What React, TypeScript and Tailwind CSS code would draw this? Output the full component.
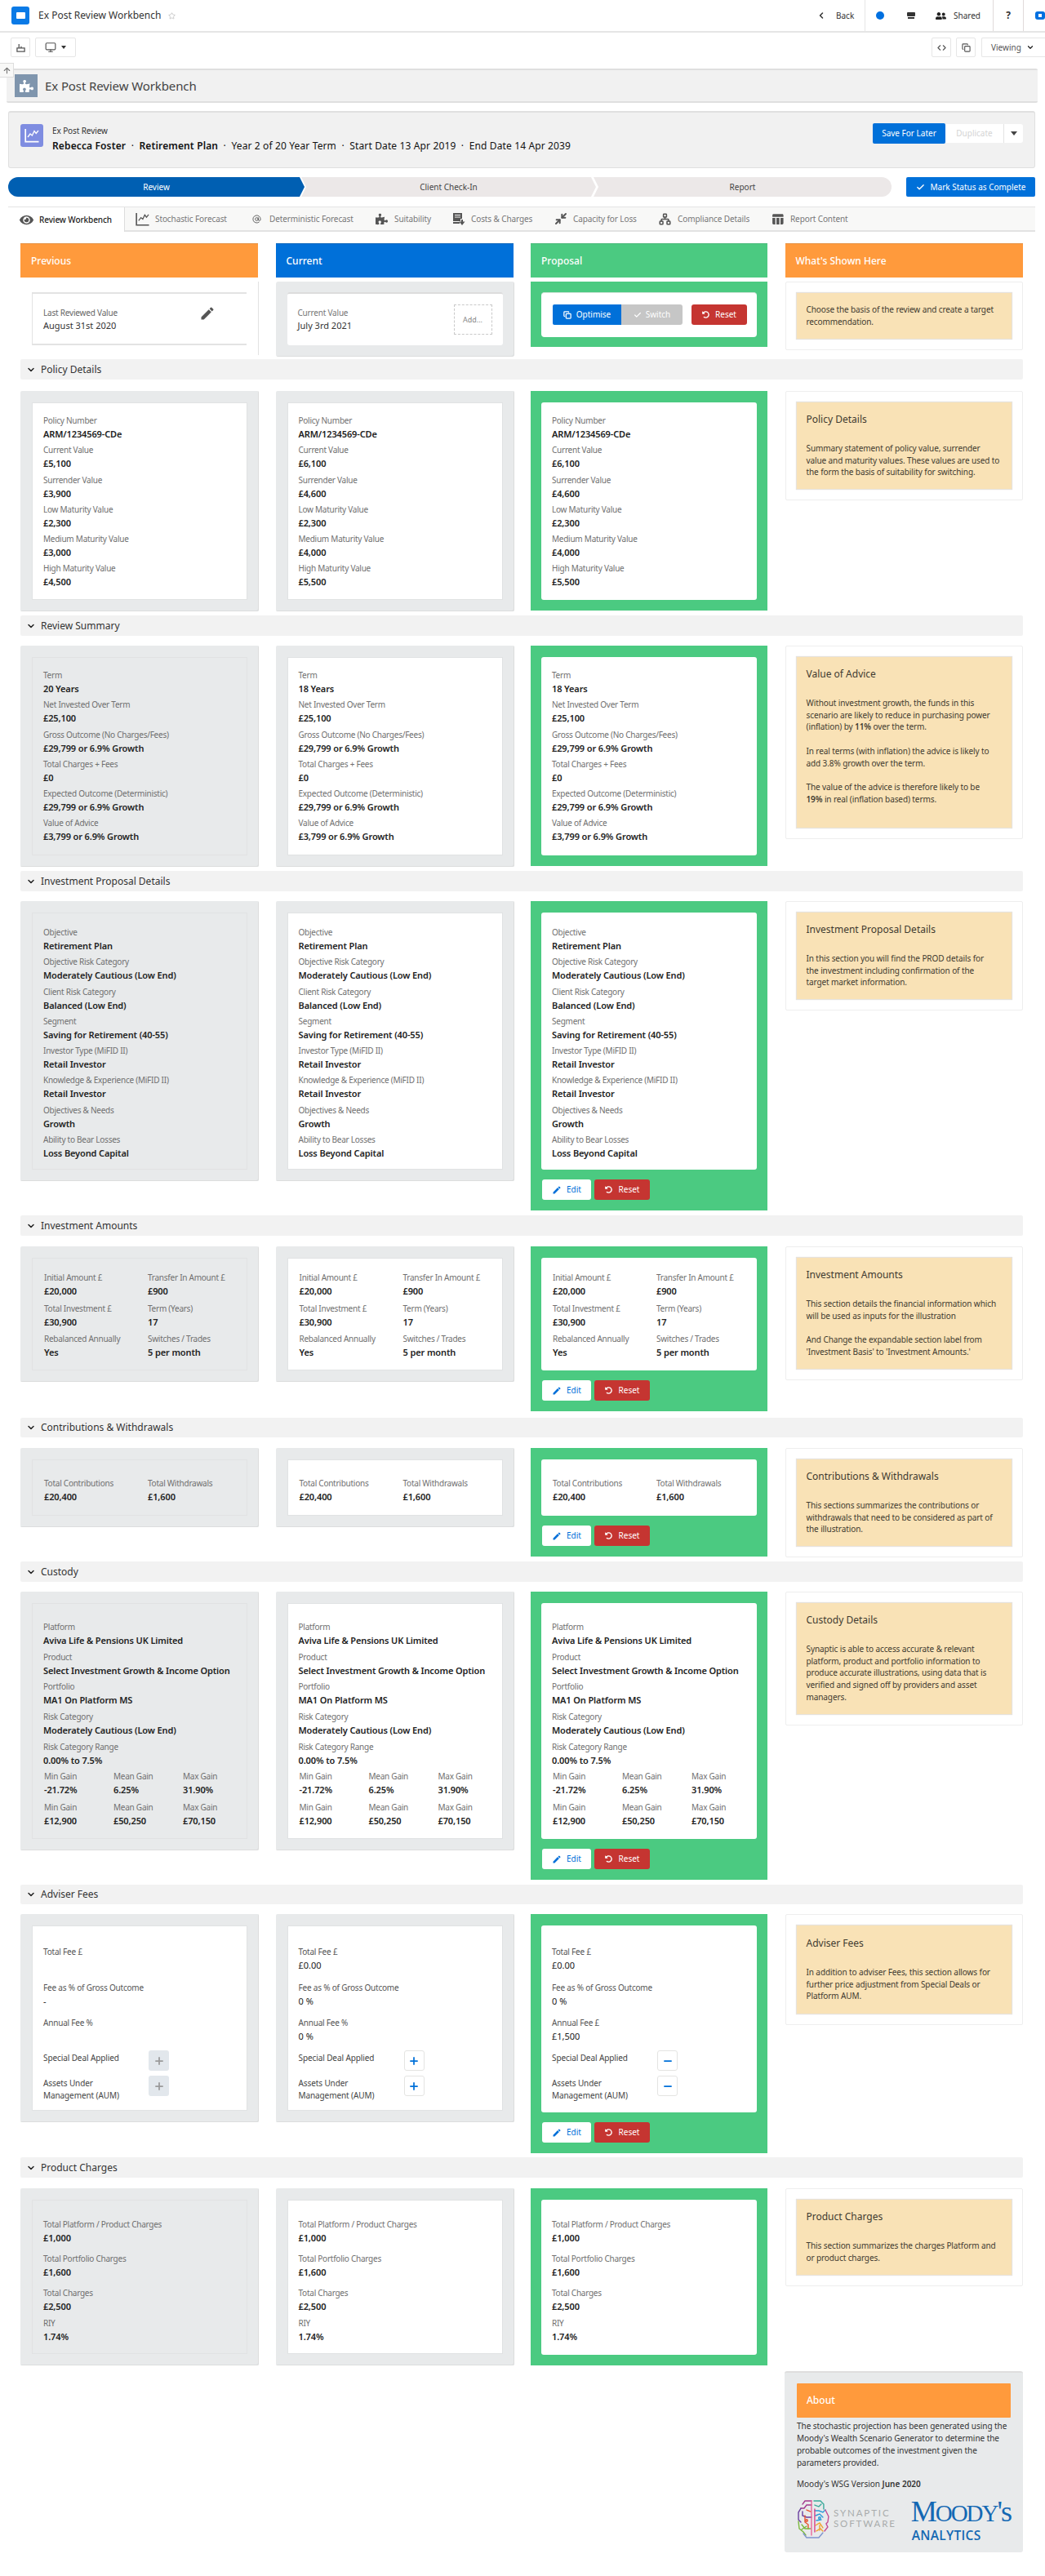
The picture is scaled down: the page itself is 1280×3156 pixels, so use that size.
import React from "react";
import { FaPuzzlePiece, FaUndoAlt, FaEye, FaUserFriends } from "react-icons/fa";
import {
  ChevronDown,
  ChevronLeft,
  Check,
  Plus,
  Minus,
  Star,
  ArrowUp,
  Monitor,
  Copy,
  Code,
  Minimize2,
  Network,
  AtSign,
} from "lucide-react";
import { MdEdit, MdTableChart } from "react-icons/md";

type Pair = [string, string];
type Tone = "grey" | "flat" | "green";

function LineChart({ className }: { className: string }) {
  return (
    <svg viewBox="0 0 18 18" className={className} fill="none" stroke="currentColor">
      <path d="M1.2 1v15.6H17.5" strokeWidth="1.7" />
      <path d="M4 11l3-4 2.4 2L12 3.5l2.2 3L17 3" strokeWidth="1.3" />
    </svg>
  );
}

function Field({ pair, row }: { pair: Pair; row: string }) {
  return (
    <div className={row}>
      <div className="h-4 whitespace-nowrap text-[10px] leading-4 tracking-[-0.25px] text-[#6f6f6f]">{pair[0]}</div>
      <div className="h-[17px] whitespace-nowrap text-[11px] leading-[17px] font-semibold tracking-[-0.12px] text-[#222]">
        {pair[1]}
      </div>
    </div>
  );
}

function Fields({ items, row }: { items: Pair[]; row: string }) {
  return (
    <>
      {items.map((p, i) => (
        <Field key={i} pair={p} row={row} />
      ))}
    </>
  );
}

function Grid({ items, cols, row }: { items: Pair[]; cols: string; row: string }) {
  return (
    <div className={"grid pl-px " + cols}>
      <Fields items={items} row={row} />
    </div>
  );
}

function EditReset() {
  return (
    <div className="mt-3 flex gap-1 pl-px">
      <button className="flex h-[25px] w-[60px] items-center justify-center gap-1.5 rounded-[3px] bg-white text-[10px] text-[#0070d9]">
        <MdEdit className="size-3" />
        Edit
      </button>
      <button className="flex h-[25px] w-[68px] items-center justify-center gap-2 rounded-[3px] bg-[#c53531] text-[10px] text-white">
        <FaUndoAlt className="size-[9px]" />
        Reset
      </button>
    </div>
  );
}

function Card({
  tone,
  inner,
  edit,
  children,
}: {
  tone: Tone;
  inner: string;
  edit?: boolean;
  children: React.ReactNode;
}) {
  const green = tone === "green";
  const outer = green
    ? "w-[290px] bg-[#4bca81] p-[13px] pt-[14px]"
    : "w-[292px] rounded-[2px] bg-[#e8eaeb] px-[14px] pt-[14px] pb-[14px] shadow-[inset_-1px_-1px_0_#dcdddd]";
  const box = green
    ? "rounded-[3px] bg-white px-[13px]"
    : tone === "grey"
      ? "border border-[#e0e2e3] bg-white px-[13px]"
      : "border border-[#e1e2e3] px-[13px]";
  return (
    <div className={"shrink-0 " + outer}>
      <div className={"overflow-hidden " + box + " " + inner}>{children}</div>
      {edit && <EditReset />}
    </div>
  );
}

function Note({ title, box, children }: { title?: string; box: string; children: React.ReactNode }) {
  return (
    <div className="w-[291px] shrink-0 rounded-[2px] border border-[#eeeeee] p-[13px]">
      <div className={"bg-[#f9e2b6] pl-3 text-[10px] leading-[14.7px] tracking-[-0.1px] text-[#3f3a30] shadow-[0_0_1px_1px_#e6e2dc] " + box}>
        {title && <h3 className="mb-[20px] text-[12px] leading-4 tracking-normal">{title}</h3>}
        <div className="whitespace-pre">{children}</div>
      </div>
    </div>
  );
}

function Section({
  title,
  height,
  bar = "h-[25px]",
  gap = "mt-[13px]",
  children,
}: {
  title: string;
  height: string;
  bar?: string;
  gap?: string;
  children: React.ReactNode;
}) {
  return (
    <section className={height}>
      <div className={"flex items-center rounded-[2px] bg-[#f2f2f2] pl-[7px] " + bar}>
        <ChevronDown className="size-[12px] text-[#222]" strokeWidth={3} />
        <h2 className="ml-[6px] text-[12px] text-[#333]">{title}</h2>
      </div>
      <Columns className={gap}>{children}</Columns>
    </section>
  );
}

function Columns({ className = "", children }: { className?: string; children: React.ReactNode }) {
  return (
    <div className={"grid grid-cols-[312.5px_312.5px_311.5px_291px] items-start " + className}>{children}</div>
  );
}

const ROW = "h-[36.3px]";

const policyPrev: Pair[] = [
  ["Policy Number", "ARM/1234569-CDe"],
  ["Current Value", "£5,100"],
  ["Surrender Value", "£3,900"],
  ["Low Maturity Value", "£2,300"],
  ["Medium Maturity Value", "£3,000"],
  ["High Maturity Value", "£4,500"],
];
const policyNow: Pair[] = [
  ["Policy Number", "ARM/1234569-CDe"],
  ["Current Value", "£6,100"],
  ["Surrender Value", "£4,600"],
  ["Low Maturity Value", "£2,300"],
  ["Medium Maturity Value", "£4,000"],
  ["High Maturity Value", "£5,500"],
];
const summary = (years: string): Pair[] => [
  ["Term", years],
  ["Net Invested Over Term", "£25,100"],
  ["Gross Outcome (No Charges/Fees)", "£29,799 or 6.9% Growth"],
  ["Total Charges + Fees", "£0"],
  ["Expected Outcome (Deterministic)", "£29,799 or 6.9% Growth"],
  ["Value of Advice", "£3,799 or 6.9% Growth"],
];
const proposal: Pair[] = [
  ["Objective", "Retirement Plan"],
  ["Objective Risk Category", "Moderately Cautious (Low End)"],
  ["Client Risk Category", "Balanced (Low End)"],
  ["Segment", "Saving for Retirement (40-55)"],
  ["Investor Type (MiFID II)", "Retail Investor"],
  ["Knowledge & Experience (MiFID II)", "Retail Investor"],
  ["Objectives & Needs", "Growth"],
  ["Ability to Bear Losses", "Loss Beyond Capital"],
];
const amounts: Pair[] = [
  ["Initial Amount £", "£20,000"],
  ["Transfer In Amount £", "£900"],
  ["Total Investment £", "£30,900"],
  ["Term (Years)", "17"],
  ["Rebalanced Annually", "Yes"],
  ["Switches / Trades", "5 per month"],
];
const contributions: Pair[] = [
  ["Total Contributions", "£20,400"],
  ["Total Withdrawals", "£1,600"],
];
const custody: Pair[] = [
  ["Platform", "Aviva Life & Pensions UK Limited"],
  ["Product", "Select Investment Growth & Income Option"],
  ["Portfolio", "MA1 On Platform MS"],
  ["Risk Category", "Moderately Cautious (Low End)"],
  ["Risk Category Range", "0.00% to 7.5%"],
];
const gains: Pair[] = [
  ["Min Gain", "-21.72%"],
  ["Mean Gain", "6.25%"],
  ["Max Gain", "31.90%"],
  ["Min Gain", "£12,900"],
  ["Mean Gain", "£50,250"],
  ["Max Gain", "£70,150"],
];
const charges: Pair[] = [
  ["Total Platform / Product Charges", "£1,000"],
  ["Total Portfolio Charges", "£1,600"],
  ["Total Charges", "£2,500"],
];

const tones: Tone[] = ["flat", "grey", "green"];

function Fees({ items, kind }: { items: Pair[]; kind: "off" | "plus" | "minus" }) {
  const btn =
    kind === "off"
      ? "bg-[#e2e7ec] text-[#9a9a9a]"
      : "border border-[#e4e4e2] bg-white text-[#0070d9]";
  const Icon = kind === "minus" ? Minus : Plus;
  return (
    <>
      {items.map((p, i) => (
        <div key={i} className="h-[43.7px]">
          <div className="h-4 text-[10px] leading-4 tracking-[-0.2px] text-[#555]">{p[0]}</div>
          <div className="h-[17px] text-[11px] leading-[17px] text-[#222]">{p[1]}</div>
        </div>
      ))}
      <div className="flex h-[31px] text-[10px] leading-[15px] tracking-[-0.1px] text-[#444]">
        <span className="w-[129px]">Special Deal Applied</span>
        <span className={"-mt-[2px] flex size-[25px] items-center justify-center rounded-[3px] " + btn}>
          <Icon className="size-[14px]" strokeWidth={3} />
        </span>
      </div>
      <div className="flex text-[10px] leading-[14.5px] tracking-[-0.1px] text-[#444]">
        <span className="w-[129px]">
          Assets Under
          <br />
          Management (AUM)
        </span>
        <span className={"-mt-[2px] flex size-[25px] items-center justify-center rounded-[3px] " + btn}>
          <Icon className="size-[14px]" strokeWidth={3} />
        </span>
      </div>
    </>
  );
}

function TopBar() {
  return (
    <header className="flex h-[40px] items-center border-b-2 border-[#e5e5e5] text-[11px] text-[#333]">
      <span className="ml-[14px] flex size-[22px] items-center justify-center rounded-[3px] bg-[#0a7ae6]">
        <span className="h-2 w-[11px] rounded-[1px] bg-white" />
      </span>
      <span className="ml-[11px] w-[153px] text-[12px]">Ex Post Review Workbench</span>
      <Star className="ml-[6px] size-[9px] text-[#bbb]" />
      <div className="ml-auto flex h-full items-center">
        <div className="flex h-full w-[60px] items-center border-r border-[#e6e6e6]">
          <ChevronLeft className="size-[12px]" strokeWidth={3} />
          <span className="ml-[12px] text-[10px]">Back</span>
        </div>
        <div className="flex h-full w-[157px] items-center border-r border-[#e0dada]">
          <span className="ml-[13px] size-[10px] rounded-full bg-[#0070e0]" />
          <span className="ml-[28px] flex w-[10px] flex-col gap-px">
            <span className="h-[5px] rounded-[1px] bg-[#333]" />
            <span className="mx-auto h-[2px] w-[8px] bg-[#333]" />
          </span>
          <FaUserFriends className="ml-[25px] size-[13px] text-[#222]" />
          <span className="ml-[9px] text-[10px]">Shared</span>
        </div>
        <div className="flex h-full w-[37px] items-center justify-center border-r border-[#e0dada] text-[12px] font-bold">?</div>
        <div className="flex w-[26px] items-center pl-[14px]">
          <span className="flex h-[10px] w-[12px] items-center justify-center rounded-[3px] bg-[#0070e0]">
            <span className="size-[4px] bg-white" />
          </span>
        </div>
      </div>
    </header>
  );
}

function ToolBar() {
  return (
    <div className="flex h-[44px] items-start pt-[6px] text-[#555]">
      <span className="ml-[13px] flex h-6 w-6 items-center justify-center rounded-[2px] border border-[#e6e6e6]">
        <svg viewBox="0 0 12 12" className="size-[11px]" fill="none" stroke="currentColor" strokeWidth="1.4">
          <path d="M3.5 1v5M6.5 4v2M1 6.5h10V11H1z" />
        </svg>
      </span>
      <span className="ml-[6px] flex h-6 w-[50px] items-center justify-center gap-[6px] rounded-[2px] border border-[#e6e6e6]">
        <Monitor className="size-[14px]" strokeWidth={2} />
        <span className="border-x-[3px] border-t-[4px] border-x-transparent border-t-[#333]" />
      </span>
      <span className="ml-auto flex h-6 w-6 items-center justify-center rounded-[2px] border border-[#e6e6e6]">
        <Code className="size-[11px]" strokeWidth={2.5} />
      </span>
      <span className="ml-[6px] flex h-6 w-6 items-center justify-center rounded-[2px] border border-[#e6e6e6]">
        <Copy className="size-[11px]" strokeWidth={2.5} />
      </span>
      <span className="ml-[7px] flex h-6 w-[78px] items-center rounded-l-[2px] border border-r-0 border-[#e6e6e6] pl-[11px] text-[10px]">
        Viewing
        <ChevronDown className="ml-[6px] size-[10px] text-[#222]" strokeWidth={3} />
      </span>
    </div>
  );
}

function StatusPath() {
  return (
    <div className="mt-[11px] flex h-6 pl-[10px] text-[10px]">
      <div className="flex w-[363px] items-center justify-center rounded-l-[12px] bg-[#005fb2] text-white [clip-path:polygon(0_0,calc(100%-6px)_0,100%_50%,calc(100%-6px)_100%,0_100%)]">
        Review
      </div>
      <div className="-ml-[4px] flex w-[361px] items-center justify-center bg-[#ece8e8] text-[#444] [clip-path:polygon(0_0,calc(100%-6px)_0,100%_50%,calc(100%-6px)_100%,0_100%,6px_50%)]">
        Client Check-In
      </div>
      <div className="-ml-[3px] flex w-[365px] items-center justify-center rounded-r-[12px] bg-[#ece8e8] text-[#444] [clip-path:polygon(0_0,100%_0,100%_100%,0_100%,6px_50%)]">
        Report
      </div>
      <button className="ml-[18px] flex w-[158px] items-center justify-center gap-[7px] rounded-[2px] bg-[#0070d9] text-[10px] text-white">
        <Check className="size-[11px]" strokeWidth={3} />
        Mark Status as Complete
      </button>
    </div>
  );
}

function Tab({ icon, label, width }: { icon: React.ReactNode; label: string; width: string }) {
  return (
    <div className={"flex h-full items-center whitespace-nowrap " + width}>
      <span className="flex w-[17px] shrink-0 justify-center text-[#555]">{icon}</span>
      <span className="ml-[7px]">{label}</span>
    </div>
  );
}

function Tabs() {
  return (
    <nav className="mt-3 ml-[10px] flex h-[31px] w-[1258px] border-t border-[#e4e4e4] text-[10px] tracking-[-0.1px] text-[#777]">
      <div className="flex w-[143px] items-center border-r border-[#ddd] pl-[14px] font-medium whitespace-nowrap text-[#222]">
        <FaEye className="size-[17px] text-[#555]" />
        <span className="ml-[7px]">Review Workbench</span>
      </div>
      <div className="flex flex-1 items-center border-b-2 border-[#e2e2e2] bg-[#f8f8f7] pl-[13px]">
        <Tab width="w-[140px]" icon={<LineChart className="size-[17px]" />} label="Stochastic Forecast" />
        <Tab width="w-[153px]" icon={<AtSign className="size-[11px]" />} label="Deterministic Forecast" />
        <Tab width="w-[94px]" icon={<FaPuzzlePiece className="size-[15px]" />} label="Suitability" />
        <Tab
          width="w-[125px]"
          icon={
            <svg viewBox="0 0 16 16" className="size-[16px]" fill="currentColor">
              <path d="M1 1h11v7h-2v3H1zM3 3v1h7V3zm0 2.600v1h7v-1zM1 12h8v2H1zM11 9h2v2.500h2.500L12 16l-3.500-4.500H11z" />
            </svg>
          }
          label="Costs & Charges"
        />
        <Tab width="w-[128px]" icon={<Minimize2 className="size-[16px]" strokeWidth={3} />} label="Capacity for Loss" />
        <Tab width="w-[138px]" icon={<Network className="size-[15px]" strokeWidth={2.5} />} label="Compliance Details" />
        <Tab width="w-[110px]" icon={<MdTableChart className="size-[19px]" />} label="Report Content" />
      </div>
    </nav>
  );
}

function Brain() {
  return (
    <svg viewBox="0 0 40 48" className="h-[48px] w-[40px]" fill="none" strokeWidth="1.4" strokeLinecap="round">
      <path d="M18 1H10L7 5M18 6h-6l-3 4H5" stroke="#a23a8d" />
      <path d="M5 10l-3 5v9l3 3M7 14v5l5 2h6" stroke="#6b3fa0" />
      <path d="M12 12l5 2M10 19v8l4 3v5" stroke="#e8542f" />
      <path d="M2 26l1 9 5 4 3 4M6 30l4 5h7M6 36l6-4" stroke="#7ab83c" />
      <path d="M18 1v42" stroke="#e8679a" />
      <path d="M21 1h8l4 4v6M22 6l5 2 3-3" stroke="#3aa99b" />
      <path d="M22 13h5l5 2 3-3M23 19l5-2 4 4M24 25l6-1" stroke="#2d9bd8" />
      <path d="M35 12l4 8-1 7-2 2 2 4-4 5" stroke="#c44a94" />
      <path d="M23 31l5-3 4 6M24 38l5-3 3 3M28 31v6" stroke="#f0a42e" />
      <path d="M22 11v28" stroke="#d83f8a" />
      <path d="M8 41l4 5h15l5-6" stroke="#7f94cf" />
      <circle cx="12" cy="25" r="1.300" stroke="#e8542f" />
      <circle cx="28" cy="22" r="1.300" stroke="#2d9bd8" />
    </svg>
  );
}

function About() {
  return (
    <div className="ml-[936px] h-[222px] w-[292px] rounded-[3px] border-t-2 border-[#dedede] bg-[#e8eaeb] px-[15px] pt-[13px]">
      <div className="flex h-[42px] items-center rounded-[1px] bg-[#ff9a3c] pl-[12px] text-[12px] font-medium text-white">About</div>
      <p className="mt-[3px] text-[10px] leading-[14.9px] tracking-[-0.05px] whitespace-pre text-[#333]">
        {"The stochastic projection has been generated using the\nMoody's Wealth Scenario Generator to determine the\nprobable outcomes of the investment given the\nparameters provided."}
      </p>
      <p className="mt-[10px] text-[10px] leading-4 text-[#333]">
        Moody's WSG Version <b className="font-semibold">June 2020</b>
      </p>
      <div className="mt-[12px] flex">
        <Brain />
        <div className="ml-[5px] w-[95px] pt-[9px] font-['Lato'] text-[11.5px] leading-[13px] tracking-[1.9px] text-[#a9acac]">
          SYNAPTIC
          <br />
          SOFTWARE
        </div>
        <div className="-mt-[3px] text-[#1468b3]">
          <div className="font-['Liberation_Serif'] text-[36px] leading-[34px] tracking-[-2px]">
            M<span className="text-[29px]">OODY</span>'s
          </div>
          <div className="mt-px ml-px font-['Open_Sans'] text-[15.5px] leading-[18px] font-semibold tracking-[0.3px]">ANALYTICS</div>
        </div>
      </div>
    </div>
  );
}

export default function App() {
  return (
    <div className="relative h-[3156px] w-[1280px] overflow-hidden bg-white font-['Noto_Sans',sans-serif] text-[#333]">
      <TopBar />
      <ToolBar />
      <div className="absolute top-[77px] left-0 flex h-[18px] w-[17px] items-center justify-center border border-l-0 border-[#ddd] bg-[#f8f8f7]">
        <ArrowUp className="size-[11px] text-[#777]" strokeWidth={2.5} />
      </div>
      <div className="ml-[8px] flex h-[42px] w-[1263px] items-center rounded-[2px] border-y-2 border-[#dfdfdf] bg-[#f1f1f1] pl-[10px]">
        <span className="flex size-[28px] items-center justify-center bg-[#7f95ad] text-white">
          <FaPuzzlePiece className="size-[17px]" />
        </span>
        <h1 className="ml-[9px] text-[15px] tracking-[-0.1px] text-[#444]">Ex Post Review Workbench</h1>
      </div>
      <div className="mt-[10px] ml-[10px] flex h-[70px] w-[1258px] items-start rounded-[3px] border border-t-2 border-[#e0e0e0] bg-[#f1f1f1]">
        <span className="mt-[14px] ml-[14px] flex size-[28px] items-center justify-center rounded-[3px] bg-[#7f8de1] text-white">
          <LineChart className="size-[18px]" />
        </span>
        <div className="ml-[11px] pt-[14px]">
          <div className="text-[10px] leading-4 tracking-[-0.1px]">Ex Post Review</div>
          <div className="mt-[2px] flex text-[12px] leading-[18px] tracking-[0.13px] whitespace-pre text-[#111]">
            <b className="font-semibold">Rebecca Foster</b>
            {"  ·  "}
            <b className="font-semibold">Retirement Plan</b>
            {"  ·  Year 2 of 20 Year Term  ·  Start Date 13 Apr 2019  ·  End Date 14 Apr 2039"}
          </div>
        </div>
        <div className="mt-[13px] mr-[14px] ml-auto flex items-center text-[10px]">
          <button className="h-[25px] w-[89px] rounded-[2px] bg-[#0070d9] text-white">Save For Later</button>
          <button className="h-[23px] w-[71px] bg-white text-[#d4d4d4]">Duplicate</button>
          <span className="flex h-[23px] w-[24px] items-center justify-center rounded-r-[3px] border-l border-[#e4e4e4] bg-white">
            <span className="border-x-4 border-t-[5px] border-x-transparent border-t-[#444]" />
          </span>
        </div>
      </div>
      <StatusPath />
      <Tabs />

      <main className="mt-[14px] ml-[25px] w-[1228px]">
        <Columns className="h-[47px] text-[12px] font-medium text-white">
          <div className="flex h-[42px] w-[291px] items-center border-t border-[#e59143] bg-[#ff9a3c] pl-[13px]">Previous</div>
          <div className="flex h-[42px] w-[291px] items-center border-t border-[#0a66bd] bg-[#0070d9] pl-[13px]">Current</div>
          <div className="flex h-[42px] w-[290px] items-center border-t border-[#4bba7b] bg-[#4bca81] pl-[13px]">Proposal</div>
          <div className="flex h-[42px] w-[291px] items-center border-t border-[#e59143] bg-[#ff9a3c] pl-[13px]">What's Shown Here</div>
        </Columns>
        <Columns className="h-[95px] text-[11px]">
          <div className="h-[90px] w-[292px] border-r border-[#e2e2e2] px-[14px] pt-[13px]">
            <div className="flex h-[65px] w-[263px] justify-between border-y-2 border-l border-[#e3e3e3] pt-[15px] pr-[38px] pl-[13px]">
              <div>
                <div className="text-[10px] leading-4 tracking-[-0.2px] text-[#666]">Last Reviewed Value</div>
                <div className="text-[11px] leading-4">August 31st 2020</div>
              </div>
              <MdEdit className="-mt-px size-[20px] text-[#555]" />
            </div>
          </div>
          <div className="h-[92px] w-[292px] rounded-[3px] bg-[#e8eaeb] px-[14px] pt-[13px] shadow-[inset_-1px_-1px_0_#dcdddd]">
            <div className="flex h-[65px] justify-between rounded-[3px] border-t-2 border-[#dcdcdc] bg-white pt-[14px] pr-[13px] pl-[13px]">
              <div className="pt-px">
                <div className="text-[10px] leading-4 tracking-[-0.2px] text-[#777]">Current Value</div>
                <div className="text-[11px] leading-4">July 3rd 2021</div>
              </div>
              <div className="-mt-px flex h-[37px] w-[47px] items-center justify-center border border-dashed border-[#c9c9c9] text-[9px] text-[#888]">
                Add...
              </div>
            </div>
          </div>
          <div className="h-[80px] w-[290px] bg-[#4bca81] px-[13px] pt-[13px]">
            <div className="flex h-[55px] items-start rounded-[4px] border-t border-[#cfe3d7] bg-white pt-[14px] pl-[14px] text-[10px] text-white">
              <span className="flex h-[25px] w-[84px] items-center justify-center gap-[6px] rounded-l-[2px] bg-[#0070d9]">
                <Copy className="size-[10px]" strokeWidth={3} />
                Optimise
              </span>
              <span className="flex h-[25px] w-[75px] items-center justify-center gap-[5px] rounded-r-[3px] bg-[#c6c6c6]">
                <Check className="size-[10px]" strokeWidth={3} />
                Switch
              </span>
              <span className="ml-[11px] flex h-[25px] w-[68px] items-center justify-center gap-[7px] rounded-[3px] bg-[#c53531]">
                <FaUndoAlt className="size-[9px]" />
                Reset
              </span>
            </div>
          </div>
          <Note box="h-[56px] pt-[13px]">{"Choose the basis of the review and create a target\nrecommendation."}</Note>
        </Columns>

        <Section title="Policy Details" height="h-[314px]" gap="mt-[14px]">
          <Card tone="grey" inner="h-[242px] pt-[13px]"><Fields items={policyPrev} row={ROW} /></Card>
          <Card tone="grey" inner="h-[242px] pt-[13px]"><Fields items={policyNow} row={ROW} /></Card>
          <Card tone="green" inner="h-[242px] pt-[14px]"><Fields items={policyNow} row={ROW} /></Card>
          <Note title="Policy Details" box="h-[106px] pt-[13px]">
            {"Summary statement of policy value, surrender\nvalue and maturity values. These values are used to\nthe form the basis of suitability for switching."}
          </Note>
        </Section>

        <Section title="Review Summary" height="h-[313px]" gap="mt-[12px]">
          <Card tone="flat" inner="h-[243px] pt-[13px]"><Fields items={summary("20 Years")} row={ROW} /></Card>
          <Card tone="grey" inner="h-[243px] pt-[13px]"><Fields items={summary("18 Years")} row={ROW} /></Card>
          <Card tone="green" inner="h-[243px] pt-[14px]"><Fields items={summary("18 Years")} row={ROW} /></Card>
          <Note title="Value of Advice" box="h-[209px] pt-[13px]">
            <p>{"Without investment growth, the funds in this\nscenario are likely to reduce in purchasing power"}</p>
            <p>
              (inflation) by <b className="font-semibold">11%</b> over the term.
            </p>
            <p className="mt-[14.7px]">{"In real terms (with inflation) the advice is likely to\nadd 3.8% growth over the term."}</p>
            <p className="mt-[14.7px]">The value of the advice is therefore likely to be</p>
            <p>
              <b className="font-semibold">19%</b> in real (inflation based) terms.
            </p>
          </Note>
        </Section>

        <Section title="Investment Proposal Details" height="h-[422px]" gap="mt-[12px]">
          {tones.map((t) => (
            <Card key={t} tone={t} edit={t === "green"} inner={t === "green" ? "h-[315px] pt-[16px]" : "h-[315px] pt-[15px]"}>
              <Fields items={proposal} row={ROW} />
            </Card>
          ))}
          <Note title="Investment Proposal Details" box="h-[106px] pt-[13px]">
            {"In this section you will find the PROD details for\nthe investment including confirmation of the\ntarget market information."}
          </Note>
        </Section>

        <Section title="Investment Amounts" height="h-[248px]">
          {tones.map((t) => (
            <Card key={t} tone={t} edit={t === "green"} inner={t === "green" ? "h-[138px] pt-[16px]" : "h-[138px] pt-[15px]"}>
              <Grid items={amounts} cols="grid-cols-[127px_1fr]" row="h-[37.6px]" />
            </Card>
          ))}
          <Note title="Investment Amounts" box="h-[136px] pt-[13px]">
            {"This section details the financial information which\nwill be used as inputs for the illustration\n\nAnd Change the expandable section label from\n'Investment Basis' to 'Investment Amounts.'"}
          </Note>
        </Section>

        <Section title="Contributions & Withdrawals" height="h-[176px]" bar="h-[24px]">
          {tones.map((t) => (
            <Card key={t} tone={t} edit={t === "green"} inner={t === "green" ? "h-[69px] pt-[21px]" : "h-[69px] pt-[20px]"}>
              <Grid items={contributions} cols="grid-cols-[127px_1fr]" row="h-[36px]" />
            </Card>
          ))}
          <Note title="Contributions & Withdrawals" box="h-[106px] pt-[13px]">
            {"This sections summarizes the contributions or\nwithdrawals that need to be considered as part of\nthe illustration."}
          </Note>
        </Section>

        <Section title="Custody" height="h-[396px]" gap="mt-[12px]">
          {tones.map((t) => (
            <Card key={t} tone={t} edit={t === "green"} inner={t === "green" ? "h-[289px] pt-[21px]" : "h-[289px] pt-[20px]"}>
              <Fields items={custody} row="h-[36.7px]" />
              <Grid items={gains} cols="grid-cols-[85px_85px_1fr]" row="h-[38px]" />
            </Card>
          ))}
          <Note title="Custody Details" box="h-[136px] pt-[13px]">
            {"Synaptic is able to access accurate & relevant\nplatform, product and portfolio information to\nproduce accurate illustrations, using data that is\nverified and signed off by providers and asset\nmanagers."}
          </Note>
        </Section>

        <Section title="Adviser Fees" height="h-[334px]" bar="h-[24px]" gap="mt-[12px]">
          <Card tone="grey" inner="h-[227px] pt-[23px]">
            <Fees kind="off" items={[["Total Fee £", ""], ["Fee as % of Gross Outcome", "-"], ["Annual Fee %", ""]]} />
          </Card>
          <Card tone="grey" inner="h-[227px] pt-[23px]">
            <Fees kind="plus" items={[["Total Fee £", "£0.00"], ["Fee as % of Gross Outcome", "0 %"], ["Annual Fee %", "0 %"]]} />
          </Card>
          <Card tone="green" edit inner="h-[229px] pt-[24px]">
            <Fees kind="minus" items={[["Total Fee £", "£0.00"], ["Fee as % of Gross Outcome", "0 %"], ["Annual Fee £", "£1,500"]]} />
          </Card>
          <Note title="Adviser Fees" box="h-[108px] pt-[14px]">
            {"In addition to adviser Fees, this section allows for\nfurther price adjustment from Special Deals or\nPlatform AUM."}
          </Note>
        </Section>

        <Section title="Product Charges" height="h-[262px]">
          {tones.map((t) => (
            <Card key={t} tone={t} inner={t === "green" ? "h-[190px] pt-[22px]" : "h-[189px] pt-[21px]"}>
              <Fields items={charges} row="h-[42px]" />
              <div className="-mt-[5px]">
                <Field pair={["RIY", "1.74%"]} row="h-[34px]" />
              </div>
            </Card>
          ))}
          <Note title="Product Charges" box="h-[92px] pt-[13px]">
            {"This section summarizes the charges Platform and\nor product charges."}
          </Note>
        </Section>
        <About />
      </main>
    </div>
  );
}
